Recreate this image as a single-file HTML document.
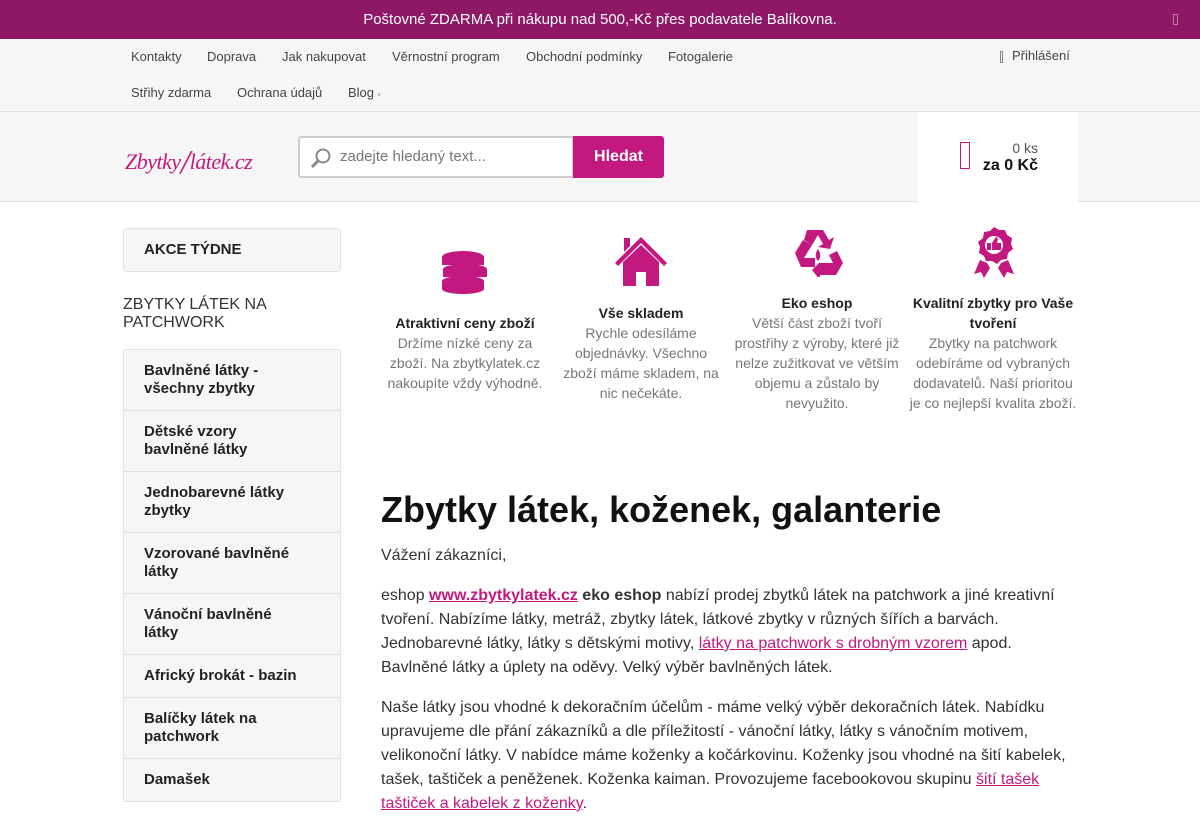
<!DOCTYPE html>
<html><head><meta charset="utf-8"><style>
*{box-sizing:border-box;margin:0;padding:0}
body{width:1200px;height:800px;overflow:hidden;font-family:"Liberation Sans",sans-serif;background:#fff;color:#333}
.top{height:39px;background:#8e1766;color:#fff;font-size:15px;text-align:center;line-height:39px;position:relative}
.top .x{position:absolute;right:22px;top:14px;width:5px;height:11px;border:1px solid #c07aa5}
.nav{background:#f6f6f6;height:72px;position:relative;font-size:13px;color:#444}
.nav span{position:absolute}
.hdr{background:#f6f6f6;height:91px;border-top:1px solid #e0e0e0;border-bottom:1px solid #e0e0e0;position:relative}
.search{position:absolute;left:298px;top:24px;width:276px;height:42px;border:2px solid #ccc;border-radius:3px 0 0 3px;background:#fff;font-size:15px;color:#777;line-height:38px;padding-left:40px}
.btn{position:absolute;left:573px;top:24px;width:91px;height:42px;background:#c2187f;color:#fff;font-weight:bold;font-size:16px;text-align:center;line-height:42px;border-radius:0 3px 3px 0}
.cart{position:absolute;left:918px;top:0;width:160px;height:90px;background:#fff}
.side{position:absolute;left:123px;top:228px;width:218px}
.box{background:#f6f6f6;border:1px solid #e2e2e2;border-radius:3px}
.item{padding:12px 20px;font-weight:bold;font-size:15px;line-height:18px;color:#222;border-bottom:1px solid #e2e2e2}
.feat{position:absolute;text-align:center;font-size:14px;line-height:20px;color:#777;width:168px}
.feat b{color:#222;display:block}
.main{position:absolute;left:381px;top:488px;width:700px;font-size:16px;line-height:24px;color:#333}
.main h1{font-size:36px;line-height:44px;color:#111;margin-bottom:12px}
.main p{margin-bottom:16px}
a{color:#c2187f}
</style></head><body>
<div class="top">Poštovné ZDARMA při nákupu nad 500,-Kč přes podavatele Balíkovna.<div class="x"></div></div>
<div class="nav">
<span style="left:131px;top:10px">Kontakty</span><span style="left:207px;top:10px">Doprava</span><span style="left:282px;top:10px">Jak nakupovat</span><span style="left:392px;top:10px">Věrnostní program</span><span style="left:526px;top:10px">Obchodní podmínky</span><span style="left:668px;top:10px">Fotogalerie</span>
<span style="left:1000px;top:10px;width:3px;height:12px;border:1px solid #888;margin-top:2px"></span><span style="left:1012px;top:9px">Přihlášení</span>
<span style="left:131px;top:46px">Střihy zdarma</span><span style="left:237px;top:46px">Ochrana údajů</span><span style="left:348px;top:46px">Blog <small style="font-size:8px">▫</small></span>
</div>
<div class="hdr">
<div style="position:absolute;left:125px;top:28px;font-family:'Liberation Serif',serif;font-style:italic;font-size:22px;color:#c2187f;letter-spacing:-0.5px">Zbytky<span style="font-size:34px;position:relative;top:4px">/</span>látek.cz</div>
<div class="search"><svg style="position:absolute;left:10px;top:9px" width="22" height="22" viewBox="0 0 22 22"><circle cx="13" cy="9" r="6.5" fill="none" stroke="#888" stroke-width="2"/><path d="M8.5 13.5L2 20" stroke="#888" stroke-width="3"/></svg>zadejte hledaný text...</div>
<div class="btn">Hledat</div>
<div class="cart"><div style="position:absolute;left:42px;top:30px;width:10px;height:27px;border:1.5px solid #c2187f"></div>
<div style="position:absolute;right:40px;top:28px;font-size:14px;color:#555">0 ks</div>
<div style="position:absolute;right:40px;top:45px;font-size:16px;font-weight:bold;color:#111">za 0 Kč</div></div>
</div>
<div class="side">
<div class="box" style="height:44px;padding:12px 20px;font-weight:bold;font-size:15px;color:#222">AKCE TÝDNE</div>
<div style="margin-top:24px;font-size:16px;line-height:18px;color:#333">ZBYTKY LÁTEK NA<br>PATCHWORK</div>
<div class="box" style="margin-top:17px;border-bottom:none">
<div class="item">Bavlněné látky -<br>všechny zbytky</div>
<div class="item">Dětské vzory<br>bavlněné látky</div>
<div class="item">Jednobarevné látky<br>zbytky</div>
<div class="item">Vzorované bavlněné<br>látky</div>
<div class="item">Vánoční bavlněné<br>látky</div>
<div class="item">Africký brokát - bazin</div>
<div class="item">Balíčky látek na<br>patchwork</div>
<div class="item">Damašek</div>
</div></div>
<svg style="position:absolute;left:440px;top:250px" width="50" height="46" viewBox="0 0 50 46" fill="#c2187f"><ellipse cx="23" cy="7" rx="21" ry="6"/><rect x="2" y="7" width="42" height="8"/><ellipse cx="25" cy="19" rx="22" ry="5"/><rect x="3" y="19" width="44" height="8"/><ellipse cx="23" cy="31" rx="21" ry="5"/><rect x="2" y="31" width="42" height="8"/><ellipse cx="23" cy="39" rx="21" ry="5"/></svg>
<svg style="position:absolute;left:615px;top:237px" width="52" height="49" viewBox="0 0 52 49" fill="#c2187f"><path d="M26 0L52 26l-3 3L26 6 3 29 0 26zM9 1h6v8l-6 6z"/><path d="M8 25L26 8l18 17v24H31V35h-10v14H8z"/></svg>
<svg style="position:absolute;left:792px;top:227px" width="52" height="50" viewBox="0 0 52 50" fill="#c2187f"><path d="M15 3h16l6 10 5-3-4 12-12-2 5-3-5-9-6 10-8-5zM3 26l8-13 9 5-8 13 11 0v9H9zM28 36h13l-4-8 8-4 6 12-7 12H28v5l-8-10 8-8z"/><path d="M26 22c-3 4-3 9 0 12 3-3 3-8 0-12z"/></svg>
<svg style="position:absolute;left:972px;top:227px" width="46" height="52" viewBox="0 0 46 52" fill="#c2187f"><path d="M22 0l5 3 6 0 2 5 5 3-1 6 2 5-5 4-1 6-6 1-4 4-5-3-6 0-2-5-5-3 1-6-2-5 5-4 1-6 6-1z"/><circle cx="22" cy="18" r="9" fill="#fff"/><rect x="15" y="16" width="4" height="7"/><path d="M20 16l4-6 2 1-1 5h4v7h-9z"/><path d="M8 33l7 3 3 5-6 10-3-6-7 2zM36 33l-7 3-3 5 6 10 3-6 7 2z"/></svg>
<div class="feat" style="left:381px;top:313px"><b>Atraktivní ceny zboží</b>Držíme nízké ceny za zboží. Na zbytkylatek.cz nakoupíte vždy výhodně.</div>
<div class="feat" style="left:557px;top:303px"><b>Vše skladem</b>Rychle odesíláme objednávky. Všechno zboží máme skladem, na nic nečekáte.</div>
<div class="feat" style="left:733px;top:293px"><b>Eko eshop</b>Větší část zboží tvoří prostřihy z výroby, které již nelze zužitkovat ve větším objemu a zůstalo by nevyužito.</div>
<div class="feat" style="left:909px;top:293px"><b>Kvalitní zbytky pro Vaše tvoření</b>Zbytky na patchwork odebíráme od vybraných dodavatelů. Naší prioritou je co nejlepší kvalita zboží.</div>
<div class="main">
<h1>Zbytky látek, koženek, galanterie</h1>
<p>Vážení zákazníci,</p>
<p>eshop <a href="#"><b>www.zbytkylatek.cz</b></a> <b>eko eshop</b> nabízí prodej zbytků látek na patchwork a jiné kreativní tvoření. Nabízíme látky, metráž, zbytky látek, látkové zbytky v různých šířích a barvách. Jednobarevné látky, látky s dětskými motivy, <a href="#">látky na patchwork s drobným vzorem</a> apod. Bavlněné látky a úplety na oděvy. Velký výběr bavlněných látek.</p>
<p>Naše látky jsou vhodné k dekoračním účelům - máme velký výběr dekoračních látek. Nabídku upravujeme dle přání zákazníků a dle příležitostí - vánoční látky, látky s vánočním motivem, velikonoční látky. V nabídce máme koženky a kočárkovinu. Koženky jsou vhodné na šití kabelek, tašek, taštiček a peněženek. Koženka kaiman. Provozujeme facebookovou skupinu <a href="#">šití tašek taštiček a kabelek z koženky</a>.</p>
</div>
</body></html>
